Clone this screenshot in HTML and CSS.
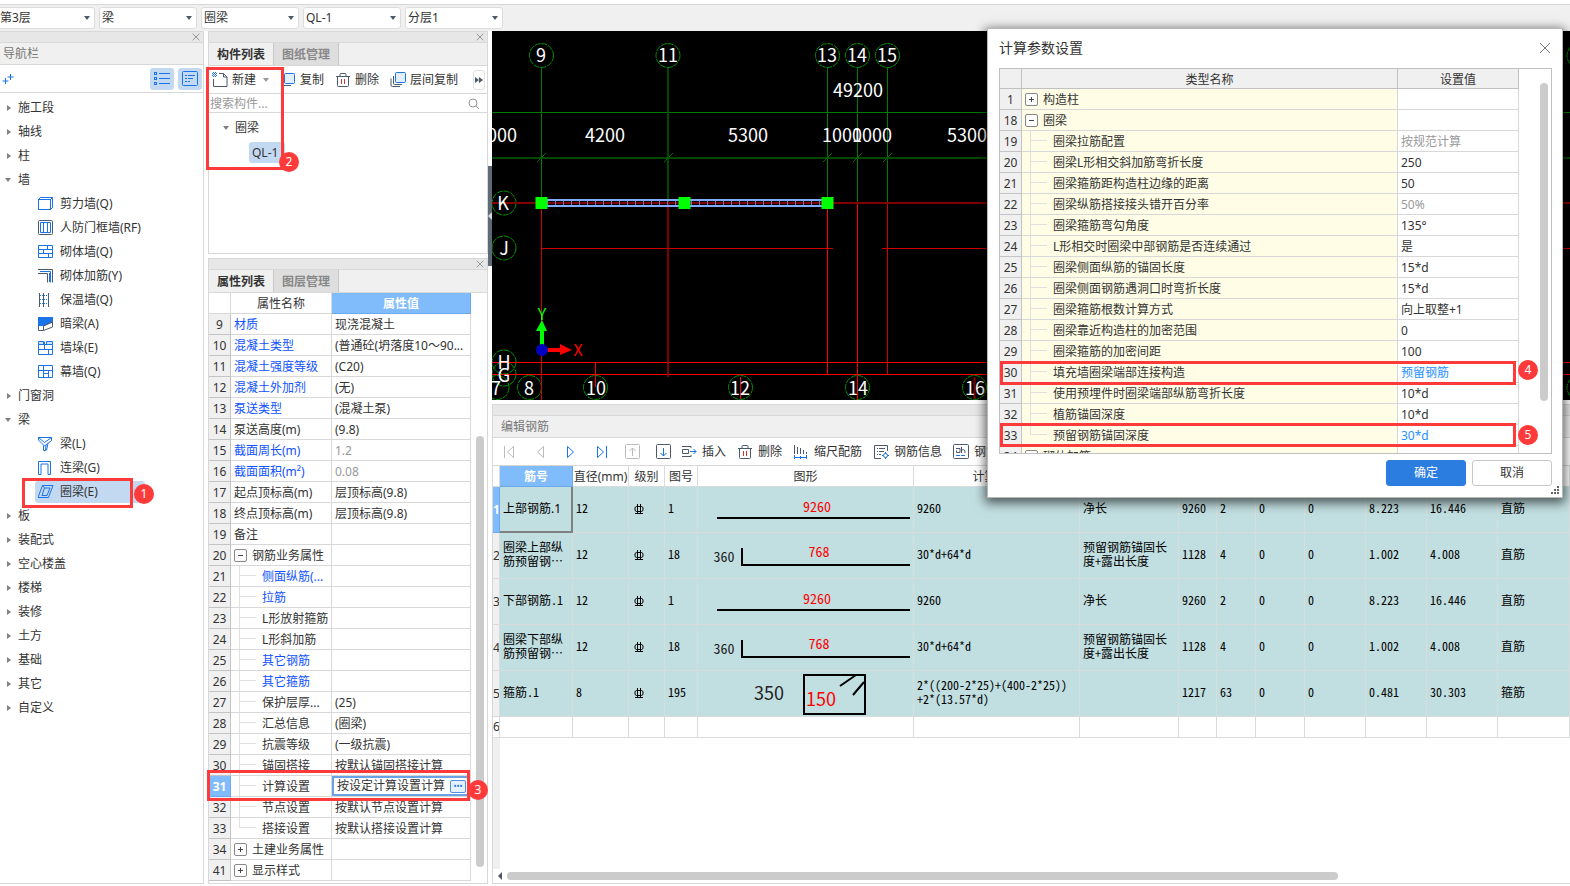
FILE: index.html
```html
<!DOCTYPE html>
<html lang="zh-CN">
<head>
    <meta charset="utf-8">
    <title>计算参数设置</title>
    <link rel="stylesheet" href="styles.css">
</head>

<body>
    <svg class="defs" aria-hidden="true">
        <symbol id="i-close" viewBox="0 0 12 12"><path d="M2 2l8 8M10 2l-8 8" fill="none" stroke="currentColor" /></symbol>
        <symbol id="i-trash" viewBox="0 0 16 16">
            <path d="M1 4.500h14M5 4V2.500q0-1 1-1h4q1 0 1 1V4M2.500 5v8.500q0 1 1 1h9q1 0 1-1V5" fill="none" stroke="#4d586b" />
            <path d="M6.500 7v5M9.500 7v5" stroke="#e03030" />
        </symbol>
        <symbol id="i-copy" viewBox="0 0 16 16">
            <rect x="4.500" y="1.500" width="10" height="10" rx="1" fill="#e3efff" stroke="#1a73e8" />
            <path d="M2.500 5v7.500q0 1 1 1H11" fill="none" stroke="#4d586b" />
        </symbol>
        <symbol id="i-copies" viewBox="0 0 16 16">
            <rect x="5.500" y=".5" width="10" height="10" rx="1" fill="#e3efff" stroke="#1a73e8" />
            <path d="M3.500 4v7.500q0 1 1 1H12M1 6.500V13q0 1.500 1.500 1.500H10" fill="none" stroke="#4d586b" />
        </symbol>
        <symbol id="i-rebar" viewBox="0 0 10 12">
            <path d="M3.500 1v9.500M6.500 1v9.500M1 10.500h8M2.500 3.500h5l1.500 1v3l-1.500 1h-5l-1.500-1v-3z" fill="none" stroke="#000" />
        </symbol>
    </svg>

    <header class="topbar">
        <label class="combo first"><select aria-label="楼层"><option>第3层</option></select></label>
        <label class="combo"><select aria-label="类别"><option>梁</option></select></label>
        <label class="combo"><select aria-label="构件类型"><option>圈梁</option></select></label>
        <label class="combo"><select aria-label="构件"><option>QL-1</option></select></label>
        <label class="combo"><select aria-label="分层"><option>分层1</option></select></label>
    </header>

    <main>
        <!-- navigation -->
        <nav class="panel nav">
            <div class="strip"><button aria-label="关闭"><svg><use href="#i-close" /></svg></button></div>
            <h2 class="title">导航栏</h2>
            <div class="nav-tools">
                <button class="plus" aria-label="添加"><svg width="12" height="12"><path d="M8.500 1v6M5.500 4h6M3.500 5v6M.5 8h6" stroke="#1a73e8" /></svg></button>
                <button class="toggle" aria-label="列表"><svg width="16" height="16" fill="none" stroke="#1a73e8"><path d="M5 2.500h11M5 7.500h11M5 12.500h11" /><rect x=".5" y="1.500" width="2" height="2" /><rect x=".5" y="6.500" width="2" height="2" /><rect x=".5" y="11.500" width="2" height="2" /></svg></button>
                <button class="toggle" aria-label="详情"><svg width="16" height="16" fill="none" stroke="#1a73e8"><rect x=".5" y=".5" width="15" height="14" rx="1" /><path d="M3 4.500h2M6 4.500h7M3 7.500h2M6 7.500h5M3 10.500h2M6 10.500h2" /></svg></button>
            </div>
            <ul class="tree">
                <li>施工段</li>
                <li>轴线</li>
                <li>柱</li>
                <li class="open">墙</li>
                <li class="leaf"><svg fill="none" stroke="#1a73e8"><rect x=".5" y="3.500" width="12" height="10" /><path d="M.5 3.500l2-2h12v10l-2 2M14.500 1.500l-2 2" /></svg>剪力墙(Q)</li>
                <li class="leaf"><svg fill="none"><rect x=".5" y=".5" width="14" height="14" rx="1" stroke="#4d586b" /><path d="M2.500 12.500v-10h10v10zM5.500 3v9M9.500 3v9" stroke="#1a73e8" /></svg>人防门框墙(RF)</li>
                <li class="leaf"><svg fill="none" stroke="#1a73e8"><path d="M.5 1.500h14v12H.5zM.5 5.500h14M.5 9.500h14M9.500 2v3.500M5.500 5.500v4M10.500 9.500v4" /></svg>砌体墙(Q)</li>
                <li class="leaf"><svg fill="none"><path d="M0 1.500h14.500v13M0 5.500h9.500v9" stroke="#4d586b" /><path d="M2 3.500h10.500v11M11.500 5v9" stroke="#1a73e8" /></svg>砌体加筋(Y)</li>
                <li class="leaf"><svg fill="none"><path d="M1.500 1v14M5.500 1v14M10.500 1v14" stroke="#4d586b" /><path d="M2 3.500h9M2 7.500h9M2 11.500h9" stroke="#1a73e8" stroke-dasharray="1 1" /></svg>保温墙(Q)</li>
                <li class="leaf"><svg fill="none"><path d="M0 1h15v5l-9 4H0z" fill="#1a73e8" /><path d="M.5 10v4.500h5V10L14.500 6v5l-9 3.500" stroke="#4d586b" /></svg>暗梁(A)</li>
                <li class="leaf"><svg fill="none" stroke="#1a73e8"><path d="M.5 1.500h5v3h-5zM8.500 1.500h6v3h-6z" fill="#d3e3fa" /><path d="M.5 4.500h14v10H.5zM.5 9.500h14M6.500 1.500v8M10.500 9.500v5" /></svg>墙垛(E)</li>
                <li class="leaf"><svg fill="none" stroke="#1a73e8"><path d="M.5 1.500h14v12H.5zM.5 6.500h14M5.500 1.500v5M5.500 9.500h5M5.500 6.500v7M10.500 6.500v7" /></svg>幕墙(Q)</li>
                <li>门窗洞</li>
                <li class="open">梁</li>
                <li class="leaf"><svg fill="none" stroke="#1a73e8"><path d="M.5 1.500h13v3l-7 5.500-6-6zM.5 1.500l6 5 7-5M5.500 9.500v5h2l.500-5.500M10 7.500l-1.500 7" /></svg>梁(L)</li>
                <li class="leaf"><svg fill="none" stroke="#1a73e8"><path d="M.5 14.500v-13h12v13h-2.500v-10.500h-7v10.500z" /></svg>连梁(G)</li>
                <li class="leaf selected"><svg fill="none" stroke="#1a73e8"><path d="M4.500 1.500h10.500l-4.500 12H0zM6.500 4h5.500l-3 7.500H4zM4.500 1.500l2 2.500" /></svg>圈梁(E)</li>
                <li>板</li>
                <li>装配式</li>
                <li>空心楼盖</li>
                <li>楼梯</li>
                <li>装修</li>
                <li>土方</li>
                <li>基础</li>
                <li>其它</li>
                <li>自定义</li>
            </ul>
        </nav>

        <div class="middle">
            <!-- component list -->
            <section class="panel components">
                <div class="strip"><button aria-label="关闭"><svg><use href="#i-close" /></svg></button></div>
                <div class="tabs"><button class="active">构件列表</button><button>图纸管理</button></div>
                <div class="tools">
                    <button><svg fill="none"><path d="M7 1.500h4.500l3.500 3.500v9.500H1.500V7M11.500 1.500V5H15" stroke="#4d586b" /><path d="M0 1.500h6M0 3.500h6M1.500 0v6M3.500 0v6" stroke="#1a73e8" stroke-dasharray="1 1" /></svg>新建<i class="drop"></i></button>
                    <button><svg><use href="#i-copy" /></svg>复制</button>
                    <button><svg><use href="#i-trash" /></svg>删除</button>
                    <button><svg><use href="#i-copies" /></svg>层间复制</button>
                    <button class="more" aria-label="更多"><svg fill="#4d586b"><path d="M0 5l4 3-4 3zM4 5l4 3-4 3z" /></svg></button>
                </div>
                <label class="search">
                    <input type="text" placeholder="搜索构件..." aria-label="搜索构件">
                    <svg width="12" height="12" fill="none" stroke="#999"><circle cx="5" cy="5" r="4" /><path d="M8 8l3 3" /></svg>
                </label>
                <ul class="items">
                    <li class="group">圈梁</li>
                    <li><span class="chip">QL-1</span></li>
                </ul>
            </section>

            <!-- properties -->
            <section class="panel props">
                <div class="strip"><button aria-label="关闭"><svg><use href="#i-close" /></svg></button></div>
                <div class="tabs"><button class="active">属性列表</button><button>图层管理</button></div>
                <div class="props-body">
                    <table class="grid">
                        <colgroup><col class="c-num"><col class="c-name"><col></colgroup>
                        <thead><tr><th></th><th>属性名称</th><th class="hot">属性值</th></tr></thead>
                        <tbody>
                            <tr><th>9</th><td class="blue">材质</td><td>现浇混凝土</td></tr>
                            <tr><th>10</th><td class="blue">混凝土类型</td><td>(普通砼(坍落度10～90...</td></tr>
                            <tr><th>11</th><td class="blue">混凝土强度等级</td><td>(C20)</td></tr>
                            <tr><th>12</th><td class="blue">混凝土外加剂</td><td>(无)</td></tr>
                            <tr><th>13</th><td class="blue">泵送类型</td><td>(混凝土泵)</td></tr>
                            <tr><th>14</th><td>泵送高度(m)</td><td>(9.8)</td></tr>
                            <tr><th>15</th><td class="blue">截面周长(m)</td><td class="dim">1.2</td></tr>
                            <tr><th>16</th><td class="blue">截面面积(m²)</td><td class="dim">0.08</td></tr>
                            <tr><th>17</th><td>起点顶标高(m)</td><td>层顶标高(9.8)</td></tr>
                            <tr><th>18</th><td>终点顶标高(m)</td><td>层顶标高(9.8)</td></tr>
                            <tr><th>19</th><td>备注</td><td></td></tr>
                            <tr><th>20</th><td><button class="fold" aria-label="收起"></button>钢筋业务属性</td><td></td></tr>
                            <tr><th>21</th><td class="sub blue">侧面纵筋(...</td><td></td></tr>
                            <tr><th>22</th><td class="sub blue">拉筋</td><td></td></tr>
                            <tr><th>23</th><td class="sub">L形放射箍筋</td><td></td></tr>
                            <tr><th>24</th><td class="sub">L形斜加筋</td><td></td></tr>
                            <tr><th>25</th><td class="sub blue">其它钢筋</td><td></td></tr>
                            <tr><th>26</th><td class="sub blue">其它箍筋</td><td></td></tr>
                            <tr><th>27</th><td class="sub">保护层厚...</td><td>(25)</td></tr>
                            <tr><th>28</th><td class="sub">汇总信息</td><td>(圈梁)</td></tr>
                            <tr><th>29</th><td class="sub">抗震等级</td><td>(一级抗震)</td></tr>
                            <tr><th>30</th><td class="sub">锚固搭接</td><td>按默认锚固搭接计算</td></tr>
                            <tr class="current"><th>31</th><td class="sub">计算设置</td><td class="editing"><div><input type="text" value="按设定计算设置计算" aria-label="计算设置"><button aria-label="编辑">•••</button></div></td></tr>
                            <tr><th>32</th><td class="sub">节点设置</td><td>按默认节点设置计算</td></tr>
                            <tr><th>33</th><td class="sub last">搭接设置</td><td>按默认搭接设置计算</td></tr>
                            <tr><th>34</th><td><button class="fold plus" aria-label="展开"></button>土建业务属性</td><td></td></tr>
                            <tr><th>41</th><td><button class="fold plus" aria-label="展开"></button>显示样式</td><td></td></tr>
                        </tbody>
                    </table>
                    <div class="track"><div class="thumb"></div></div>
                </div>
            </section>
        </div>

        <div class="splitter"><button aria-label="折叠"><svg width="4" height="8"><path d="M4 0v8L0 4z" fill="#d5d9df" /></svg></button></div>

        <div class="right">
            <!-- drawing, in window coordinates -->
            <svg class="cad">
                <g transform="translate(-492 -31)">
                    <g fill="none" stroke="#007a00">
                        <path d="M541.500 67v136M827.500 67v136M857.500 67v136M887.500 67v136M492 112.500h1078" />
                        <path d="M668 67v136M492 158h1078" stroke="#004800" stroke-width="2" />
                        <path d="M537 162l9-9M664 162l9-9M823 162l9-9M853 162l9-9M883 162l9-9" stroke="#007000" />
                        <g stroke="#009400" stroke-dasharray="6 1">
                            <circle cx="541.500" cy="55.500" r="12" /><circle cx="668" cy="55.500" r="12" />
                            <circle cx="827.500" cy="55.500" r="12" /><circle cx="857.500" cy="55.500" r="12" />
                            <circle cx="887.500" cy="55.500" r="12" /><circle cx="1579" cy="55.500" r="12" />
                            <circle cx="504" cy="203" r="12" /><circle cx="504" cy="248" r="12" />
                            <circle cx="504" cy="362" r="12" /><circle cx="504" cy="374" r="12" />
                            <circle cx="497" cy="387.500" r="12" /><circle cx="529.500" cy="387.500" r="12" />
                            <circle cx="595.500" cy="387.500" r="12" /><circle cx="740.500" cy="387.500" r="12" />
                            <circle cx="857.500" cy="387.500" r="12" /><circle cx="974.500" cy="387.500" r="12" />
                            <circle cx="1579" cy="387.500" r="12" />
                        </g>
                    </g>
                    <g fill="none" stroke="#d00000">
                        <path d="M541.500 203v197M887.500 203v171M541.500 248.500H833M882 248.500h688" />
                        <path d="M827.500 203v171M857.500 203v197M492 362.500h1078M492 374.500h1078M595.500 363v24M740.500 377v22" stroke="#f00" />
                        <path d="M492 203h1078M668 203v174M974.500 377v22" stroke="#800000" stroke-width="2" />
                    </g>
                    <path d="M547 203h275" stroke="#5a78c8" stroke-width="5" stroke-dasharray="1 7" />
                    <path d="M541 200h287M541 206h287" stroke="#82aaff" stroke-width="2" />
                    <path d="M535.500 197h12v12h-12zM678.500 197h12v12h-12zM821.500 197h12v12h-12z" fill="#0f0" />
                    <path d="M540 345v-14h-4l6-11 5 11h-3v14z" fill="#0f0" />
                    <path d="M547 348h13v-4l12 6-12 5v-3h-13z" fill="#f00" />
                    <circle cx="542" cy="350" r="6" fill="#0000c0" />
                    <g class="cad-text">
                        <text x="541" y="62">9</text><text x="668" y="62">11</text><text x="827" y="62">13</text>
                        <text x="857" y="62">14</text><text x="887" y="62">15</text><text x="858" y="97">49200</text>
                        <text x="497" y="142">1000</text><text x="605" y="142">4200</text><text x="748" y="142">5300</text>
                        <text x="842" y="142">1000</text><text x="872" y="142">1000</text><text x="967" y="142">5300</text>
                        <text x="503" y="210">K</text><text x="504" y="255">J</text>
                        <text x="504" y="369">H</text><text x="504" y="382">G</text>
                        <text x="496" y="395">7</text><text x="529" y="395">8</text><text x="596" y="395">10</text>
                        <text x="740" y="395">12</text><text x="858" y="395">14</text><text x="975" y="395">16</text>
                        <text class="axis-y" x="542" y="320">Y</text><text class="axis-x" x="578" y="356">X</text>
                    </g>
                </g>
            </svg>

            <!-- rebar editor -->
            <section class="panel rebar">
                <div class="strip"></div>
                <h2 class="title">编辑钢筋</h2>
                <div class="tools">
                    <button class="step" aria-label="首行"><svg fill="none" stroke="#bbb"><path d="M3.500 2v12M12.500 2.500v11L6.500 8z" /></svg></button>
                    <button class="step" aria-label="上一行"><svg fill="none" stroke="#bbb"><path d="M11.500 2.500v11L5.500 8z" /></svg></button>
                    <button class="step" aria-label="下一行"><svg fill="none" stroke="#1a73e8"><path d="M4.500 2.500v11l6-5.500z" /></svg></button>
                    <button class="step" aria-label="末行"><svg fill="none" stroke="#1a73e8"><path d="M12.500 2v12M3.500 2.500v11l6-5.500z" /></svg></button>
                    <button class="step" aria-label="上移"><svg fill="none" stroke="#bbb"><rect x=".5" y=".5" width="14" height="14" rx="1" /><path d="M7.500 12V4M4.500 7l3-3 3 3" /></svg></button>
                    <button class="step" aria-label="下移"><svg fill="none" stroke="#4d586b"><rect x=".5" y=".5" width="14" height="14" rx="1" /><path d="M7.500 4v8M4.500 9l3 3 3-3" stroke="#1a73e8" /></svg></button>
                    <button><svg fill="none" stroke="#4d586b"><path d="M1 2.500h9V4M1 12.500h9V11M1.500 5.500h6v4h-6z" /><path d="M9 7.500h6M12.500 5l2.500 2.500-2.500 2.500" stroke="#1a73e8" /></svg>插入</button>
                    <button><svg><use href="#i-trash" /></svg>删除</button>
                    <button><svg fill="none" stroke="#4d586b"><path d="M1.500 1v9M4.500 3v7M7.500 4v6M10.500 6v4M13.500 8v2" /><path d="M1.500 11v4M13.500 11v4M1.500 13.500h12M7.500 12v3" stroke="#1a73e8" /></svg>缩尺配筋</button>
                    <button><svg fill="none" stroke="#4d586b"><path d="M8 14.500H1.500v-13h13V7M4 4.500h1M6 4.500h6M4 7.500h1M6 7.500h5M4 10.500h1M6 10.500h2" /><path d="M12.500 8v2M12.500 13v2M9 11.500h7" stroke="#1a73e8" /><circle cx="12.500" cy="11.500" r="2" stroke="#1a73e8" fill="#fff" /></svg>钢筋信息</button>
                    <button><svg fill="none" stroke="#4d586b"><rect x=".5" y=".5" width="15" height="14" rx="1" /><path d="M3 4.500h4v4H3.500v-2M8.500 3v6M8.500 6q4-1.500 3.500 3" /><path d="M3 11.500h4M8 11.500h4" stroke="#1a73e8" /></svg>钢筋三维</button>
                </div>
                <div class="rebar-body">
                    <table class="sheet">
                        <colgroup><col class="w7"><col class="w73"><col class="w56"><col class="w36"><col class="w33"><col class="w216"><col class="w166"><col class="w99"><col class="w38"><col class="w39"><col class="w49"><col class="w61"><col class="w61"><col class="w71"><col></colgroup>
                        <thead>
                            <tr><th></th><th class="hot">筋号</th><th>直径(mm)</th><th>级别</th><th>图号</th><th>图形</th><th>计算公式</th><th></th><th></th><th></th><th></th><th></th><th></th><th></th><th></th></tr>
                        </thead>
                        <tbody>
                            <tr>
                                <th class="hot">1</th><td class="cursor">上部钢筋.1</td><td>12</td><td class="mark-cell"><svg><use href="#i-rebar" /></svg></td><td>1</td>
                                <td class="shape"><svg><path d="M19 31h193" /><text class="red" x="119" y="25">9260</text></svg></td>
                                <td>9260</td><td>净长</td><td>9260</td><td>2</td><td>0</td><td>0</td><td>8.223</td><td>16.446</td><td>直筋</td>
                            </tr>
                            <tr>
                                <th>2</th><td>圈梁上部纵筋预留钢…</td><td>12</td><td class="mark-cell"><svg><use href="#i-rebar" /></svg></td><td>18</td>
                                <td class="shape"><svg><path d="M44 15v17h168" /><text x="26" y="29">360</text><text class="red" x="121" y="24">768</text></svg></td>
                                <td>30*d+64*d</td><td>预留钢筋锚固长度+露出长度</td><td>1128</td><td>4</td><td>0</td><td>0</td><td>1.002</td><td>4.008</td><td>直筋</td>
                            </tr>
                            <tr>
                                <th>3</th><td>下部钢筋.1</td><td>12</td><td class="mark-cell"><svg><use href="#i-rebar" /></svg></td><td>1</td>
                                <td class="shape"><svg><path d="M19 31h193" /><text class="red" x="119" y="25">9260</text></svg></td>
                                <td>9260</td><td>净长</td><td>9260</td><td>2</td><td>0</td><td>0</td><td>8.223</td><td>16.446</td><td>直筋</td>
                            </tr>
                            <tr>
                                <th>4</th><td>圈梁下部纵筋预留钢…</td><td>12</td><td class="mark-cell"><svg><use href="#i-rebar" /></svg></td><td>18</td>
                                <td class="shape"><svg><path d="M44 15v17h168" /><text x="26" y="29">360</text><text class="red" x="121" y="24">768</text></svg></td>
                                <td>30*d+64*d</td><td>预留钢筋锚固长度+露出长度</td><td>1128</td><td>4</td><td>0</td><td>0</td><td>1.002</td><td>4.008</td><td>直筋</td>
                            </tr>
                            <tr>
                                <th>5</th><td>箍筋.1</td><td>8</td><td class="mark-cell"><svg><use href="#i-rebar" /></svg></td><td>195</td>
                                <td class="shape"><svg><path d="M106 4h61v39h-61zM142 15l16-11M155 24l11-13" /><text class="big" x="71" y="29">350</text><text class="big red" x="123" y="35">150</text></svg></td>
                                <td>2*((200-2*25)+(400-2*25))<br>+2*(13.57*d)</td><td></td><td>1217</td><td>63</td><td>0</td><td>0</td><td>0.481</td><td>30.303</td><td>箍筋</td>
                            </tr>
                            <tr class="blank"><th>6</th><td></td><td></td><td></td><td></td><td></td><td></td><td></td><td></td><td></td><td></td><td></td><td></td><td></td><td></td></tr>
                        </tbody>
                    </table>
                </div>
                <div class="hscroll"><svg width="6" height="8"><path d="M5 0v8L1 4z" fill="#4d586b" /></svg><div class="thumb"></div></div>
            </section>
        </div>
    </main>

    <!-- settings dialog -->
    <div class="dialog" role="dialog" aria-labelledby="dialog-title">
        <header>
            <h1 id="dialog-title">计算参数设置</h1>
            <button aria-label="关闭"><svg width="12" height="12" fill="none" stroke="#777"><path d="M1 1l10 10M11 1L1 11" /></svg></button>
        </header>
        <div class="dialog-body">
            <table class="grid">
                <colgroup><col class="c-num"><col><col class="c-value"></colgroup>
                <thead><tr><th></th><th>类型名称</th><th>设置值</th></tr></thead>
                <tbody>
                    <tr><th>1</th><td><button class="fold plus" aria-label="展开"></button>构造柱</td><td></td></tr>
                    <tr><th>18</th><td><button class="fold" aria-label="收起"></button>圈梁</td><td></td></tr>
                    <tr><th>19</th><td class="sub">圈梁拉筋配置</td><td class="dim">按规范计算</td></tr>
                    <tr><th>20</th><td class="sub">圈梁L形相交斜加筋弯折长度</td><td>250</td></tr>
                    <tr><th>21</th><td class="sub">圈梁箍筋距构造柱边缘的距离</td><td>50</td></tr>
                    <tr><th>22</th><td class="sub">圈梁纵筋搭接接头错开百分率</td><td class="dim">50%</td></tr>
                    <tr><th>23</th><td class="sub">圈梁箍筋弯勾角度</td><td>135°</td></tr>
                    <tr><th>24</th><td class="sub">L形相交时圈梁中部钢筋是否连续通过</td><td>是</td></tr>
                    <tr><th>25</th><td class="sub">圈梁侧面纵筋的锚固长度</td><td>15*d</td></tr>
                    <tr><th>26</th><td class="sub">圈梁侧面钢筋遇洞口时弯折长度</td><td>15*d</td></tr>
                    <tr><th>27</th><td class="sub">圈梁箍筋根数计算方式</td><td>向上取整+1</td></tr>
                    <tr><th>28</th><td class="sub">圈梁靠近构造柱的加密范围</td><td>0</td></tr>
                    <tr><th>29</th><td class="sub">圈梁箍筋的加密间距</td><td>100</td></tr>
                    <tr><th>30</th><td class="sub">填充墙圈梁端部连接构造</td><td class="changed">预留钢筋</td></tr>
                    <tr><th>31</th><td class="sub">使用预埋件时圈梁端部纵筋弯折长度</td><td>10*d</td></tr>
                    <tr><th>32</th><td class="sub">植筋锚固深度</td><td>10*d</td></tr>
                    <tr><th>33</th><td class="sub last">预留钢筋锚固深度</td><td class="changed">30*d</td></tr>
                    <tr><th>34</th><td><button class="fold plus" aria-label="展开"></button>砌体加筋</td><td></td></tr>
                </tbody>
            </table>
            <div class="track"><div class="thumb"></div></div>
        </div>
        <footer>
            <button class="primary">确定</button>
            <button>取消</button>
        </footer>
        <svg class="grip" width="8" height="8" fill="#666"><path d="M6 0h2v2H6zM3 3h2v2H3zM6 3h2v2H6zM0 6h2v2H0zM3 6h2v2H3zM6 6h2v2H6z" /></svg>
        <div class="callout c4"><b>4</b></div>
        <div class="callout c5"><b>5</b></div>
    </div>

    <div class="callout c1"><b>1</b></div>
    <div class="callout c2"><b>2</b></div>
    <div class="callout c3"><b>3</b></div>
</body>

</html>
```
FILE: styles.css
```css
* {
    box-sizing: border-box;
}

html,
body {
    margin: 0;
    height: 100%;
}

body {
    display: flex;
    flex-direction: column;
    position: relative;
    overflow: hidden;
    background: #fff;
    color: #333;
    font: 12px/20px "Noto Sans", "Noto Sans CJK SC", sans-serif;
}

h1,
h2,
ul {
    margin: 0;
    padding: 0;
    font-size: 12px;
    font-weight: normal;
    list-style: none;
}

button,
input,
select {
    margin: 0;
    padding: 0;
    border: 0;
    background: none;
    color: inherit;
    font: inherit;
}

svg {
    display: block;
    flex: none;
}

.defs {
    position: absolute;
    width: 0;
    height: 0;
}

/* top bar */

.topbar {
    display: flex;
    gap: 4px;
    height: 27px;
    margin-top: 4px;
    padding-top: 2px;
    border-top: 1px solid #d8d8d8;
    background: #f0f0f0;
}

.combo {
    position: relative;
    width: 98px;
    height: 22px;
    border: 1px solid #dcdcdc;
    border-radius: 3px;
    background: #fff;
}

.combo.first {
    width: 95px;
    border-left: 0;
    border-radius: 0 3px 3px 0;
}

.combo select {
    appearance: none;
    width: 100%;
    height: 20px;
    padding-left: 2px;
    line-height: 20px;
}

.combo.first select {
    padding-left: 0;
}

.combo::after,
.drop {
    border: 3px solid transparent;
    border-top: 4px solid #4d586b;
    border-bottom: 0;
    content: "";
}

.combo::after {
    position: absolute;
    top: 8px;
    right: 4px;
    pointer-events: none;
}

main {
    display: grid;
    grid-template-columns: 204px 280px 4px minmax(0, 1fr);
    flex: 1;
    min-height: 0;
    padding-bottom: 2px;
}

.panel {
    display: flex;
    flex-direction: column;
    min-height: 0;
    border: solid #d8d8d8;
    border-width: 0 1px 1px;
    background: #fff;
}

.strip {
    display: flex;
    flex: none;
    justify-content: flex-end;
    height: 12px;
    padding-right: 1px;
    border: solid #d8d8d8;
    border-width: 1px 0;
    background: #e7e7e7;
}

.strip button {
    width: 12px;
    height: 10px;
    color: #888;
}

.strip svg {
    width: 12px;
    height: 10px;
}

.title {
    flex: none;
    height: 22px;
    padding-left: 8px;
    border-bottom: 1px solid #d8d8d8;
    background: #f0f0f0;
    color: #777;
    line-height: 21px;
}

/* navigation */

.nav {
    border-left: 0;
}

.nav .title {
    padding-left: 3px;
}

.nav-tools {
    display: flex;
    flex: none;
    align-items: center;
    gap: 4px;
    height: 28px;
    padding: 0 1px 0 2px;
    border-bottom: 1px solid #d8d8d8;
}

.nav-tools .plus {
    margin-right: auto;
}

.toggle {
    display: grid;
    place-items: center;
    width: 24px;
    height: 22px;
    border-radius: 3px;
    background: #c3d9f1;
}

.tree {
    display: flex;
    flex-direction: column;
    padding-top: 3px;
}

.tree li {
    display: flex;
    align-items: center;
    height: 24px;
    padding-left: 7px;
    line-height: 24px;
}

.tree li::before {
    width: 0;
    margin-right: 7px;
    border: 3px solid transparent;
    border-left: 4px solid #808080;
    border-right: 0;
    content: "";
}

.tree li.open,
.items .group {
    padding-left: 5px;
}

.tree li.open::before,
.items .group::before {
    margin-right: 7px;
    border: 3px solid transparent;
    border-top: 4px solid #808080;
    border-bottom: 0;
    content: "";
}

.items .group::before {
    margin-right: 6px;
}

.tree li.leaf {
    gap: 6px;
    height: 22px;
    margin: 1px 58px 1px 35px;
    padding-left: 3px;
    border-radius: 3px;
    line-height: 22px;
}

.tree li.leaf::before {
    display: none;
}

.tree li.selected {
    background: #c3d9f1;
}

.tree svg,
.tools svg {
    width: 16px;
    height: 16px;
}

/* middle column */

.middle {
    display: grid;
    grid-template-rows: 223px minmax(0, 1fr);
    gap: 4px;
    min-height: 0;
    margin-left: 4px;
    width: 280px;
}

.tabs {
    display: flex;
    flex: none;
    height: 23px;
    border-bottom: 1px solid #d8d8d8;
    background: #f0f0f0;
}

.tabs button {
    width: 65px;
    padding-top: 2px;
    border: 1px solid #c8c8c8;
    border-width: 0 1px 0 0;
    background: #dedede;
    color: #888;
    font-weight: bold;
}

.tabs .active {
    background: #f0f0f0;
    color: #333;
}

.tools {
    display: flex;
    flex: none;
    align-items: center;
    gap: 12px;
    height: 28px;
    padding-left: 3px;
    border-bottom: 1px solid #d8d8d8;
    white-space: nowrap;
    overflow: hidden;
}

.components .tools {
    gap: 11px;
    padding-top: 1px;
}

.tools button {
    display: flex;
    flex: none;
    align-items: center;
    gap: 4px;
}

.tools .drop {
    margin-left: 3px;
    border-top-color: #999;
}

.tools .more {
    width: 12px;
    height: 20px;
    margin-left: 4px;
    padding-left: 1px;
    border: 1px solid #e0e0e0;
    border-radius: 3px;
}

.search {
    display: flex;
    flex: none;
    align-items: center;
    height: 19px;
    padding: 1px 7px 0 1px;
    border-bottom: 1px solid #d8d8d8;
}

.search input {
    flex: 1;
    min-width: 0;
    height: 18px;
    outline: 0;
}

.search input::placeholder {
    color: #999;
}

.items {
    padding: 3px 0 0 9px;
}

.items li {
    display: flex;
    align-items: center;
    height: 24px;
}

.items li:not(.group) {
    padding-left: 31px;
}

.chip {
    width: 36px;
    padding-left: 3px;
    border-radius: 3px;
    background: #c3d9f1;
    line-height: 21px;
}

/* numbered grids */

.props-body,
.dialog-body {
    display: flex;
    min-height: 0;
}

table {
    border-collapse: separate;
    border-spacing: 0;
    table-layout: fixed;
}

.grid {
    flex: 1;
    width: 0;
}

.c-num {
    width: 22px;
}

.c-name {
    width: 101px;
}

.c-value {
    width: 121px;
}

.grid th,
.grid td {
    height: 21px;
    padding: 2px 0 0 3px;
    border: solid #d8d8d8;
    border-width: 0 1px 1px 0;
    line-height: 18px;
    text-align: left;
    white-space: nowrap;
    overflow: hidden;
}

.grid th {
    padding: 2px 0 0;
    font-weight: normal;
    text-align: center;
}

.grid tbody th {
    border-color: #c4c4c4;
    background: #f0f0f0;
}

.grid th.hot,
.grid .current th,
.sheet th.hot {
    border-color: #6aa9ee;
    background: #80bbfb;
    color: #fff;
    font-weight: bold;
}

.grid .blue {
    color: #0f52ff;
}

.grid .dim {
    color: #999;
}

.grid .changed {
    color: #1e90ff;
}

/* branch lines of the nested rows */
.grid .sub {
    padding-left: 31px;
    background-image: linear-gradient(#e0e0e0, #e0e0e0), linear-gradient(#e0e0e0, #e0e0e0);
    background-position: 8px 0, 8px 9px;
    background-repeat: no-repeat;
    background-size: 1px 100%, 17px 1px;
}

.grid .last {
    background-size: 1px 9px, 17px 1px;
}

.fold {
    position: relative;
    width: 13px;
    height: 13px;
    margin-right: 5px;
    border: 1px solid #888;
    border-radius: 2px;
    background: #fff;
    vertical-align: -1px;
}

.fold::before,
.fold.plus::after {
    position: absolute;
    top: 5px;
    left: 3px;
    width: 5px;
    height: 1px;
    background: #444;
    content: "";
}

.fold.plus::after {
    top: 3px;
    left: 5px;
    width: 1px;
    height: 5px;
}

.grid .editing {
    padding: 0;
}

.editing div {
    display: flex;
    align-items: center;
    height: 20px;
    padding: 0 2px 0 3px;
    border: 2px solid #6aa3e3;
}

.editing input {
    flex: 1;
    min-width: 0;
    height: 16px;
    outline: 0;
}

.editing button {
    width: 16px;
    height: 13px;
    border: 1px solid #4d8fe0;
    border-radius: 2px;
    background: #e6f1ff;
    color: #1a73e8;
    font-size: 8px;
    line-height: 10px;
}

.track {
    flex: none;
    width: 16px;
    padding: 143px 3px 14px 5px;
}

.thumb {
    height: 100%;
    border-radius: 4px;
    background: #cbcbcb;
}

/* splitter between the side panels and the drawing */

.splitter {
    margin-left: 4px;
    width: 4px;
}

.splitter button {
    display: grid;
    align-items: center;
    width: 4px;
    height: 100px;
    margin-top: 135px;
    background: #5f6a78;
}

/* drawing and rebar editor */

.right {
    display: grid;
    grid-template-rows: 369px minmax(0, 1fr);
    gap: 4px;
    min-height: 0;
    margin-left: 4px;
}

.cad {
    width: 100%;
    height: 369px;
    background: #000;
}

.cad-text {
    fill: #fff;
    font: 18px "Noto Sans CJK SC", sans-serif;
    text-anchor: middle;
}

.axis-x,
.axis-y {
    font-size: 16px;
}

.axis-x {
    fill: #f00;
}

.axis-y {
    fill: #0f0;
}

.rebar {
    min-width: 0;
    border-width: 0 0 1px 1px;
}

.rebar .tools {
    gap: 11px;
    padding-left: 0;
}

.rebar .tools button {
    gap: 5px;
}

.rebar .tools .step {
    justify-content: center;
    width: 31px;
    margin-right: -11px;
}

.rebar .tools .step + button:not(.step) {
    margin-left: 13px;
}

/* the last arrow keeps no gap of its own */
.rebar .tools .step:nth-child(6) {
    margin-right: -22px;
}

.rebar-body {
    flex: 1;
    min-height: 0;
    overflow: hidden;
    background: linear-gradient(#f0f0f0, #f0f0f0) 0 0 / 7px 100% no-repeat;
}

.sheet {
    width: 100%;
    color: #000;
    font: 12px/14px "Noto Sans CJK SC", sans-serif;
    font-feature-settings: "hwid";
}

.w7 { width: 7px; }
.w73 { width: 73px; }
.w56 { width: 56px; }
.w36 { width: 36px; }
.w33 { width: 33px; }
.w216 { width: 216px; }
.w166 { width: 166px; }
.w99 { width: 99px; }
.w38 { width: 38px; }
.w39 { width: 39px; }
.w49 { width: 49px; }
.w61 { width: 61px; }
.w71 { width: 71px; }

.sheet th,
.sheet td {
    height: 46px;
    padding: 0 3px 4px;
    border: solid #d9dcdc;
    border-width: 0 1px 1px 0;
    text-align: left;
    overflow: hidden;
}

.sheet td {
    background: #c1dee0;
}

.sheet th {
    padding: 0;
    font-family: "Noto Sans", "Noto Sans CJK SC", sans-serif;
    font-feature-settings: normal;
    font-weight: normal;
    text-align: center;
    white-space: nowrap;
    color: #333;
}

.sheet tbody th {
    background: #f0f0f0;
}

.sheet thead th,
.sheet .blank th,
.sheet .blank td {
    height: 21px;
    padding: 0;
    background: #fff;
}

.sheet thead th {
    padding-top: 2px;
}

.sheet thead th.hot {
    background: #80bbfb;
    color: #fff;
}

.sheet tbody th.hot {
    color: #fff;
    background: #80bbfb;
}

.sheet td.cursor {
    padding: 0 0 0 3px;
    border: solid #808080;
    border-width: 0 2px 2px 0;
    font-family: "Noto Sans", "Noto Sans CJK SC", sans-serif;
    font-feature-settings: normal;
}

.mark-cell svg {
    width: 10px;
    height: 12px;
    margin: 3px 0 0 2px;
}

.sheet td.shape {
    padding: 0;
}

.shape svg {
    width: 100%;
    height: 45px;
    fill: none;
    stroke: #000;
    stroke-width: 2;
}

.shape text {
    fill: #222;
    stroke: none;
    font-size: 14px;
    text-anchor: middle;
}

.shape text.big {
    font-size: 18px;
    font-feature-settings: normal;
}

.shape text.red {
    fill: #f00;
}

.hscroll {
    display: flex;
    flex: none;
    align-items: center;
    gap: 4px;
    height: 14px;
    padding-left: 4px;
}

.hscroll .thumb {
    width: calc(78% - 6px);
    height: 8px;
}

/* dialog */

.dialog {
    position: absolute;
    top: 28px;
    right: 7px;
    display: flex;
    flex-direction: column;
    width: 576px;
    height: 470px;
    padding: 0 10px 11px 11px;
    border: 1px solid #b8b8b8;
    background: #fff;
    box-shadow: 0 3px 10px 2px rgba(0, 0, 0, 0.6);
}

.dialog > header {
    display: flex;
    flex: none;
    align-items: center;
    justify-content: space-between;
    height: 39px;
    padding: 0 1px 2px 0;
}

.dialog h1 {
    font-size: 14px;
}

.dialog-body {
    flex: 1;
    overflow: hidden;
    border: 1px solid #c0c0c0;
}

.dialog .grid thead th {
    height: 20px;
    border-color: #c0c0c0;
    background: #f0f0f0;
    line-height: 17px;
}

.dialog .grid td:nth-child(2) {
    background-color: #fffde5;
}

.dialog .track {
    width: 32px;
    padding: 14px 3px 52px 21px;
}

.dialog footer {
    display: flex;
    flex: none;
    justify-content: flex-end;
    gap: 6px;
    padding-top: 6px;
}

.dialog footer button {
    width: 80px;
    height: 26px;
    border: 1px solid #c8c8c8;
    border-radius: 3px;
}

.dialog footer .primary {
    border-color: #2b7de0;
    background: #2b7de0;
    color: #fff;
}

.grip {
    position: absolute;
    right: 3px;
    bottom: 3px;
}

/* numbered callouts drawn over the window */

.callout {
    position: absolute;
    border: 3px solid #fe3a3a;
    pointer-events: none;
}

.callout b {
    position: absolute;
    width: 20px;
    height: 20px;
    border-radius: 50%;
    background: #fe3a3a;
    color: #fff;
    font-weight: normal;
    text-align: center;
}

.c1 {
    top: 478px;
    left: 22px;
    width: 111px;
    height: 30px;
}

.c1 b {
    top: 3px;
    right: -24px;
}

.c2 {
    top: 67px;
    left: 206px;
    width: 78px;
    height: 103px;
}

.c2 b {
    right: -18px;
    bottom: -5px;
}

.c3 {
    top: 770px;
    left: 207px;
    width: 263px;
    height: 31px;
}

.c3 b {
    top: 7px;
    right: -21px;
}

.c4,
.c5 {
    left: 12px;
    width: 516px;
    height: 24px;
}

.c4 {
    top: 332px;
}

.c5 {
    top: 394px;
}

.c4 b,
.c5 b {
    top: -4px;
    right: -25px;
}

.c5 b {
    top: -1px;
}
```
